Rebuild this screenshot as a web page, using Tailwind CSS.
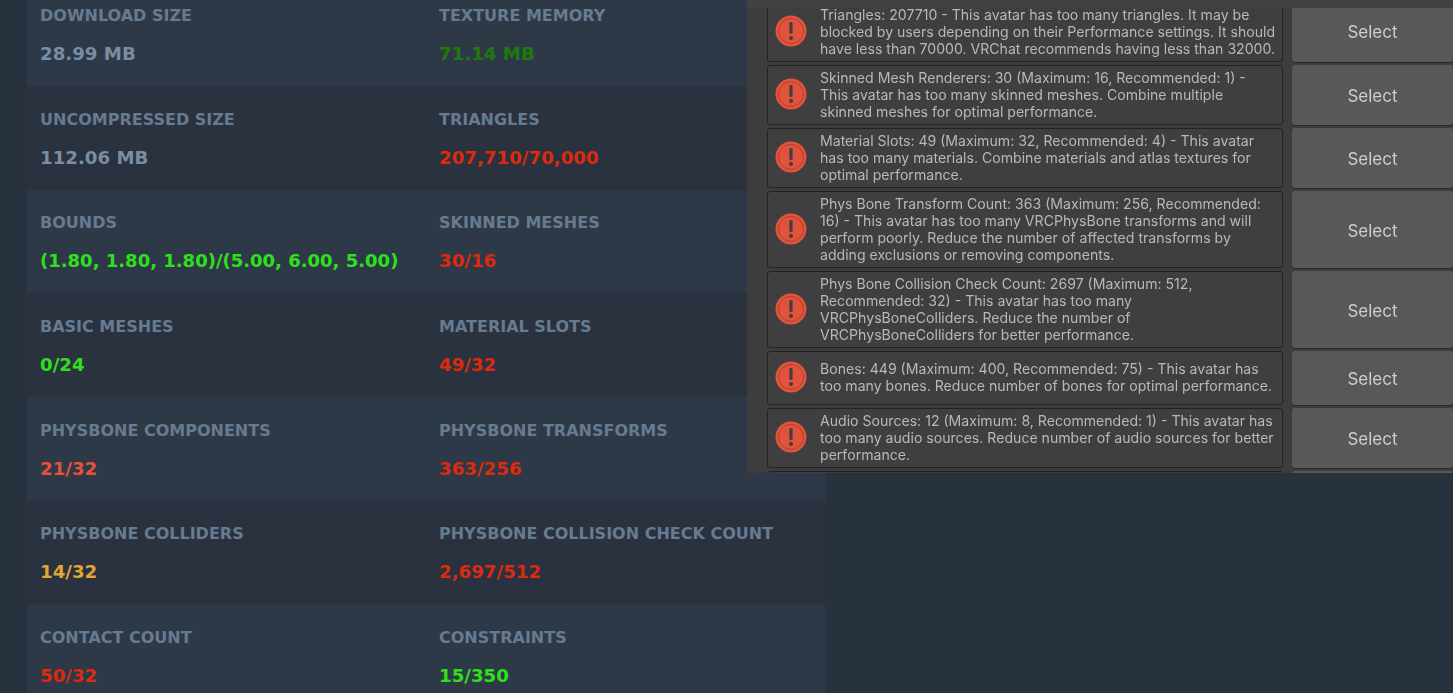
<!DOCTYPE html>
<html lang="en">
<head>
<meta charset="utf-8">
<title>Avatar performance</title>
<script src="https://cdn.jsdelivr.net/npm/@tailwindcss/browser@4"></script>
</head>
<body class="relative h-[693px] w-[1453px] overflow-hidden bg-[#28323e] font-['DejaVu_Sans',sans-serif]">
<main class="-mt-[17.7px] ml-[27px] flex w-[798px] flex-col">
  <section class="grid h-[103.7px] grid-cols-[399px_399px] bg-[#2d3947] pl-[13px] pt-[21.6px]">
    <div><div class="text-[16px] leading-[24px] font-bold text-[#677b90]">DOWNLOAD SIZE</div><div class="mt-[14px] text-[18.2px] leading-[24px] font-bold text-[#7a8ea3]">28.99 MB</div></div>
    <div><div class="text-[16px] leading-[24px] font-bold text-[#677b90]">TEXTURE MEMORY</div><div class="mt-[14px] text-[18.2px] leading-[24px] font-bold text-[#1f7a0d]">71.14 MB</div></div>
  </section>
  <section class="grid h-[103.7px] grid-cols-[399px_399px] bg-[#29323e] pl-[13px] pt-[21.6px]">
    <div><div class="text-[16px] leading-[24px] font-bold text-[#677b90]">UNCOMPRESSED SIZE</div><div class="mt-[14px] text-[18.2px] leading-[24px] font-bold text-[#7a8ea3]">112.06 MB</div></div>
    <div><div class="text-[16px] leading-[24px] font-bold text-[#677b90]">TRIANGLES</div><div class="mt-[14px] text-[18.2px] leading-[24px] font-bold text-[#dc2a0e]">207,710/70,000</div></div>
  </section>
  <section class="grid h-[103.7px] grid-cols-[399px_399px] bg-[#2d3947] pl-[13px] pt-[21.6px]">
    <div><div class="text-[16px] leading-[24px] font-bold text-[#677b90]">BOUNDS</div><div class="mt-[14px] text-[18px] leading-[24px] font-bold text-[#2fe01c]">(1.80, 1.80, 1.80)/(5.00, 6.00, 5.00)</div></div>
    <div><div class="text-[16px] leading-[24px] font-bold text-[#677b90]">SKINNED MESHES</div><div class="mt-[14px] text-[18.2px] leading-[24px] font-bold text-[#dc2a0e]">30/16</div></div>
  </section>
  <section class="grid h-[103.7px] grid-cols-[399px_399px] bg-[#29323e] pl-[13px] pt-[21.6px]">
    <div><div class="text-[16px] leading-[24px] font-bold text-[#677b90]">BASIC MESHES</div><div class="mt-[14px] text-[18.2px] leading-[24px] font-bold text-[#2fe01c]">0/24</div></div>
    <div><div class="text-[16px] leading-[24px] font-bold text-[#677b90]">MATERIAL SLOTS</div><div class="mt-[14px] text-[18.2px] leading-[24px] font-bold text-[#dc2a0e]">49/32</div></div>
  </section>
  <section class="grid h-[103.7px] grid-cols-[399px_399px] bg-[#2d3947] pl-[13px] pt-[21.6px]">
    <div><div class="text-[16px] leading-[24px] font-bold text-[#677b90]">PHYSBONE COMPONENTS</div><div class="mt-[14px] text-[18.2px] leading-[24px] font-bold text-[#e8503a]">21/32</div></div>
    <div><div class="text-[16px] leading-[24px] font-bold text-[#677b90]">PHYSBONE TRANSFORMS</div><div class="mt-[14px] text-[18.2px] leading-[24px] font-bold text-[#dc2a0e]">363/256</div></div>
  </section>
  <section class="grid h-[103.7px] grid-cols-[399px_399px] bg-[#29323e] pl-[13px] pt-[21.6px]">
    <div><div class="text-[16px] leading-[24px] font-bold text-[#677b90]">PHYSBONE COLLIDERS</div><div class="mt-[14px] text-[18.2px] leading-[24px] font-bold text-[#e0a535]">14/32</div></div>
    <div><div class="text-[16px] leading-[24px] font-bold text-[#677b90]">PHYSBONE COLLISION CHECK COUNT</div><div class="mt-[14px] text-[18.2px] leading-[24px] font-bold text-[#dc2a0e]">2,697/512</div></div>
  </section>
  <section class="grid h-[103.7px] grid-cols-[399px_399px] bg-[#2d3947] pl-[13px] pt-[21.6px]">
    <div><div class="text-[16px] leading-[24px] font-bold text-[#677b90]">CONTACT COUNT</div><div class="mt-[14px] text-[18.2px] leading-[24px] font-bold text-[#dc2a0e]">50/32</div></div>
    <div><div class="text-[16px] leading-[24px] font-bold text-[#677b90]">CONSTRAINTS</div><div class="mt-[14px] text-[18.2px] leading-[24px] font-bold text-[#2fe01c]">15/350</div></div>
  </section>
</main>

<aside class="absolute top-0 left-[747px] h-[473px] w-[706px] overflow-hidden bg-[#3d3d3d] font-['Inter',sans-serif] blur-[0.5px]">
  <div class="h-[8px] bg-[#424242]"></div>
  <div class="ml-[20px] flex h-[465px] flex-col gap-[3px] overflow-hidden">
    <div class="-mt-[6px] flex h-[60px] shrink-0 gap-[9px]">
      <div class="flex w-[516px] items-center rounded-[3px] border border-[#222] bg-[#3f3f3f] pb-[2px]">
        <svg class="ml-[7px] h-[32px] w-[32px] shrink-0" viewBox="0 0 32 32"><circle cx="16" cy="16" r="15.5" fill="#e2533d"/><circle cx="16" cy="16" r="12.5" fill="none" stroke="#a8402f" stroke-width="0.9"/><rect x="14.4" y="7" width="3.2" height="12" rx="1.4" fill="#3f3f3f"/><circle cx="16" cy="23" r="2" fill="#3f3f3f"/></svg>
        <p class="ml-[13px] text-[14.1px] leading-[17px] whitespace-nowrap text-[#b8b8b8]">Triangles: 207710 - This avatar has too many triangles. It may be<br>blocked by users depending on their Performance settings. It should<br>have less than 70000. VRChat recommends having less than 32000.</p>
      </div>
      <div class="flex w-[161px] items-center justify-center rounded-[3px] bg-[#585858] pt-[2px] text-[17px] text-[#cdcdcd] shadow-[0_1px_0_#2a2a2a]">Select</div>
    </div>
    <div class="flex h-[60px] shrink-0 gap-[9px]">
      <div class="flex w-[516px] items-center rounded-[3px] border border-[#222] bg-[#3f3f3f] pb-[2px]">
        <svg class="ml-[7px] h-[32px] w-[32px] shrink-0" viewBox="0 0 32 32"><circle cx="16" cy="16" r="15.5" fill="#e2533d"/><circle cx="16" cy="16" r="12.5" fill="none" stroke="#a8402f" stroke-width="0.9"/><rect x="14.4" y="7" width="3.2" height="12" rx="1.4" fill="#3f3f3f"/><circle cx="16" cy="23" r="2" fill="#3f3f3f"/></svg>
        <p class="ml-[13px] text-[14.1px] leading-[17px] whitespace-nowrap text-[#b8b8b8]">Skinned Mesh Renderers: 30 (Maximum: 16, Recommended: 1) -<br>This avatar has too many skinned meshes. Combine multiple<br>skinned meshes for optimal performance.</p>
      </div>
      <div class="flex w-[161px] items-center justify-center rounded-[3px] bg-[#585858] pt-[4px] text-[17px] text-[#cdcdcd] shadow-[0_1px_0_#2a2a2a]">Select</div>
    </div>
    <div class="flex h-[60px] shrink-0 gap-[9px]">
      <div class="flex w-[516px] items-center rounded-[3px] border border-[#222] bg-[#3f3f3f] pb-[2px]">
        <svg class="ml-[7px] h-[32px] w-[32px] shrink-0" viewBox="0 0 32 32"><circle cx="16" cy="16" r="15.5" fill="#e2533d"/><circle cx="16" cy="16" r="12.5" fill="none" stroke="#a8402f" stroke-width="0.9"/><rect x="14.4" y="7" width="3.2" height="12" rx="1.4" fill="#3f3f3f"/><circle cx="16" cy="23" r="2" fill="#3f3f3f"/></svg>
        <p class="ml-[13px] text-[14.1px] leading-[17px] whitespace-nowrap text-[#b8b8b8]">Material Slots: 49 (Maximum: 32, Recommended: 4) - This avatar<br>has too many materials. Combine materials and atlas textures for<br>optimal performance.</p>
      </div>
      <div class="flex w-[161px] items-center justify-center rounded-[3px] bg-[#585858] pt-[4px] text-[17px] text-[#cdcdcd] shadow-[0_1px_0_#2a2a2a]">Select</div>
    </div>
    <div class="flex h-[77px] shrink-0 gap-[9px]">
      <div class="flex w-[516px] items-center rounded-[3px] border border-[#222] bg-[#3f3f3f] pb-[2px]">
        <svg class="ml-[7px] h-[32px] w-[32px] shrink-0" viewBox="0 0 32 32"><circle cx="16" cy="16" r="15.5" fill="#e2533d"/><circle cx="16" cy="16" r="12.5" fill="none" stroke="#a8402f" stroke-width="0.9"/><rect x="14.4" y="7" width="3.2" height="12" rx="1.4" fill="#3f3f3f"/><circle cx="16" cy="23" r="2" fill="#3f3f3f"/></svg>
        <p class="ml-[13px] text-[14.1px] leading-[17px] whitespace-nowrap text-[#b8b8b8]">Phys Bone Transform Count: 363 (Maximum: 256, Recommended:<br>16) - This avatar has too many VRCPhysBone transforms and will<br>perform poorly. Reduce the number of affected transforms by<br>adding exclusions or removing components.</p>
      </div>
      <div class="flex w-[161px] items-center justify-center rounded-[3px] bg-[#585858] pt-[4px] text-[17px] text-[#cdcdcd] shadow-[0_1px_0_#2a2a2a]">Select</div>
    </div>
    <div class="flex h-[77px] shrink-0 gap-[9px]">
      <div class="flex w-[516px] items-center rounded-[3px] border border-[#222] bg-[#3f3f3f] pb-[2px]">
        <svg class="ml-[7px] h-[32px] w-[32px] shrink-0" viewBox="0 0 32 32"><circle cx="16" cy="16" r="15.5" fill="#e2533d"/><circle cx="16" cy="16" r="12.5" fill="none" stroke="#a8402f" stroke-width="0.9"/><rect x="14.4" y="7" width="3.2" height="12" rx="1.4" fill="#3f3f3f"/><circle cx="16" cy="23" r="2" fill="#3f3f3f"/></svg>
        <p class="ml-[13px] text-[14.1px] leading-[17px] whitespace-nowrap text-[#b8b8b8]">Phys Bone Collision Check Count: 2697 (Maximum: 512,<br>Recommended: 32) - This avatar has too many<br>VRCPhysBoneColliders. Reduce the number of<br>VRCPhysBoneColliders for better performance.</p>
      </div>
      <div class="flex w-[161px] items-center justify-center rounded-[3px] bg-[#585858] pt-[4px] text-[17px] text-[#cdcdcd] shadow-[0_1px_0_#2a2a2a]">Select</div>
    </div>
    <div class="flex h-[54px] shrink-0 gap-[9px]">
      <div class="flex w-[516px] items-center rounded-[3px] border border-[#222] bg-[#3f3f3f] pb-[2px]">
        <svg class="ml-[7px] h-[32px] w-[32px] shrink-0" viewBox="0 0 32 32"><circle cx="16" cy="16" r="15.5" fill="#e2533d"/><circle cx="16" cy="16" r="12.5" fill="none" stroke="#a8402f" stroke-width="0.9"/><rect x="14.4" y="7" width="3.2" height="12" rx="1.4" fill="#3f3f3f"/><circle cx="16" cy="23" r="2" fill="#3f3f3f"/></svg>
        <p class="ml-[13px] text-[14.1px] leading-[17px] whitespace-nowrap text-[#b8b8b8]">Bones: 449 (Maximum: 400, Recommended: 75) - This avatar has<br>too many bones. Reduce number of bones for optimal performance.</p>
      </div>
      <div class="flex w-[161px] items-center justify-center rounded-[3px] bg-[#585858] pt-[4px] text-[17px] text-[#cdcdcd] shadow-[0_1px_0_#2a2a2a]">Select</div>
    </div>
    <div class="flex h-[60px] shrink-0 gap-[9px]">
      <div class="flex w-[516px] items-center rounded-[3px] border border-[#222] bg-[#3f3f3f] pb-[2px]">
        <svg class="ml-[7px] h-[32px] w-[32px] shrink-0" viewBox="0 0 32 32"><circle cx="16" cy="16" r="15.5" fill="#e2533d"/><circle cx="16" cy="16" r="12.5" fill="none" stroke="#a8402f" stroke-width="0.9"/><rect x="14.4" y="7" width="3.2" height="12" rx="1.4" fill="#3f3f3f"/><circle cx="16" cy="23" r="2" fill="#3f3f3f"/></svg>
        <p class="ml-[13px] text-[14.1px] leading-[17px] whitespace-nowrap text-[#b8b8b8]">Audio Sources: 12 (Maximum: 8, Recommended: 1) - This avatar has<br>too many audio sources. Reduce number of audio sources for better<br>performance.</p>
      </div>
      <div class="flex w-[161px] items-center justify-center rounded-[3px] bg-[#585858] pt-[4px] text-[17px] text-[#cdcdcd] shadow-[0_1px_0_#2a2a2a]">Select</div>
    </div>
    <div class="flex h-[60px] shrink-0 gap-[9px]">
      <div class="w-[516px] rounded-[3px] border border-[#222] bg-[#3f3f3f]"></div>
      <div class="w-[161px] rounded-[3px] bg-[#585858]"></div>
    </div>
  </div>
</aside>
</body>
</html>
